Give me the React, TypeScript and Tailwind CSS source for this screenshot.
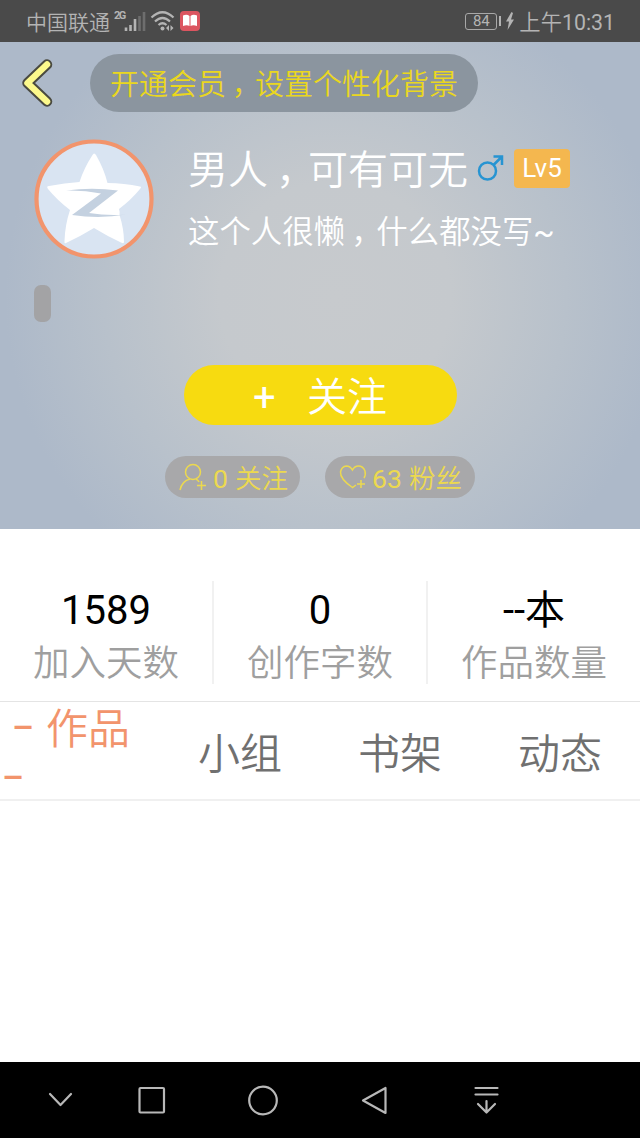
import { type ReactNode } from "react";

interface Stat {
  value: string;
  label: string;
}

const stats: Stat[] = [
  { value: "1589", label: "加入天数" },
  { value: "0", label: "创作字数" },
  { value: "--本", label: "作品数量" },
];

const tabs = ["小组", "书架", "动态"];

const StatusBar = () => {
  return (
    <div className="flex h-[42px] items-center bg-[#4a4a4a] pl-[26px] pr-[25px] text-[#b4b4b4]">
      <span className="w-[88px] pt-[3px] text-[21px] font-[350] leading-[42px]">中国联通</span>
      <span className="mb-[11px] w-[10px] text-[11px] font-bold leading-none tracking-[-1.5px]">2G</span>
      <svg width="22" height="22" viewBox="0 0 22 22" className="mt-px">
        <g stroke="#b4b4b4" strokeWidth="2.6">
          <path d="M2 20v-3.500M6.500 20v-6M11 20V8" />
          <path d="M15.500 20V5M20 20V1" stroke="#6e6e6e" />
        </g>
      </svg>
      <svg width="26" height="22" viewBox="0 0 26 22" className="ml-[4px]">
        <g fill="none" stroke="#b4b4b4" strokeWidth="2.2">
          <path d="M1.500 7.500Q12.500 -3 23.500 7.500M5 11.500Q12.500 4.500 20 11.500M8.500 15Q12.500 11.500 16.500 15" />
        </g>
        <circle cx="12.500" cy="18.500" r="2" fill="#b4b4b4" />
        <path d="M19 15v6l-3-3zM20.500 15v6l3-3z" fill="#b4b4b4" />
      </svg>
      <svg width="20" height="20" viewBox="0 0 20 20" className="ml-1">
        <rect width="20" height="20" rx="4" fill="#dc5560" />
        <path d="M3 4.500Q7 3 9.500 5v10Q7 13.500 3 15zM17 4.500Q13 3 10.500 5v10Q13 13.500 17 15z" fill="#fff" />
      </svg>
      <div className="ml-auto flex items-center">
        <div className="mr-[2px] flex h-[17px] w-8 items-center justify-center rounded-[3px] border border-[#a8a8a8] text-[15px] leading-none">
          84
        </div>
        <div className="h-[10px] w-[2px] bg-[#b4b4b4]" />
        <svg width="8" height="18" viewBox="0 0 8 18" className="ml-[5px]">
          <path d="M5.500 0L0 9.500h3L1.500 18L8 7.500H5L7 1z" fill="#b4b4b4" />
        </svg>
        <span className="ml-[5px] pt-[3px] text-[21.300px] font-[350] leading-[42px]">
          上午<span className="font-normal">10:31</span>
        </span>
      </div>
    </div>
  );
};

// half-width glyph set towards the middle of a full-width cell
const Comma = () => {
  return (
    <span className="inline-block w-[1em] indent-[0.2em] [font-feature-settings:'halt']">，</span>
  );
};

const Avatar = () => {
  return (
    <svg width="120" height="120" viewBox="0 0 120 120" className="shrink-0">
      <circle cx="60" cy="60" r="57.500" fill="#d9e4f2" stroke="#f2946c" strokeWidth="4.200" />
      <path
        d="M58.500 16Q60 13 62 16Q70 30 73.500 44Q90 44 106 47.500Q108 48 106 50Q97 61 85 70Q86 73 85.500 76Q90 90 90 103Q90 105 87 103.500Q73 97 60 89Q47 97 32 104Q30 105 30.500 102Q31 86 36 71Q23 61 14 50Q12 47 15 47Q31 44 45.500 43Q50 29 58.500 16z"
        fill="#fff"
      />
      <path
        d="M32 51.500Q58 48 84 51.500L55 74Q74 77 92 75.500Q66 80 38 76L67 54.500Q50 51 32 51.500z"
        fill="#c4d1e0"
      />
    </svg>
  );
};

const CountPill = ({ className, children }: { className: string; children: ReactNode }) => {
  return (
    <div
      className={`flex h-[42px] items-center rounded-full bg-[#a8a8aa] pl-[14px] text-[26.500px] leading-[42px] text-[#ecd94f] ${className}`}
    >
      {children}
    </div>
  );
};

const Hero = () => {
  return (
    <div className="h-[487px] bg-[#adb9c9] bg-[radial-gradient(ellipse_330px_330px_at_335px_255px,#c7cacd_0%,#c5c9cd_35%,#b8c1cb_70%,#adb9c9_100%)] pt-3">
      <div className="flex h-[58px] items-center">
        <svg width="34" height="52" viewBox="0 0 34 52" className="ml-5 shrink-0">
          <g fill="none" strokeLinecap="round" strokeLinejoin="round">
            <path d="M27 7.500L7.500 26L27 44.500" stroke="#4a4a40" strokeWidth="10.500" />
            <path d="M27 7.500L7.500 26L27 44.500" stroke="#fcf98c" strokeWidth="6.500" />
          </g>
        </svg>
        <div className="ml-9 h-[58px] w-[388px] whitespace-nowrap rounded-full bg-[#8b959f] pl-5 text-[29px] font-[350] leading-[63px] text-[#ead71e]">
          开通会员
          <Comma />
          设置个性化背景
        </div>
      </div>

      <div className="flex pl-[34px] pt-[27px]">
        <Avatar />
        <div className="ml-[34px] whitespace-nowrap text-white">
          <div className="flex h-[58px] items-center">
            <span className="pt-[6px] text-[40px] font-[350] leading-[58px]">
              男人
              <Comma />
              可有可无
            </span>
            <svg width="28" height="28" viewBox="0 0 28 28" className="ml-[9px]">
              <g fill="none" stroke="#2794d2" strokeWidth="2.500">
                <circle cx="10.500" cy="17" r="8.500" />
                <path d="M16.500 11L25 2.500M16.500 2.500H25V11" />
              </g>
            </svg>
            <span className="ml-[9px] h-[39px] w-14 rounded-[4px] bg-[#f4b74f] text-center text-[26px] leading-[39px]">
              Lv5
            </span>
          </div>
          <div className="mt-[10px] text-[31.400px] font-[350] leading-[51px]">
            这个人很懒
            <Comma />
            什么都没写<span className="font-normal">~</span>
          </div>
        </div>
      </div>

      <div className="ml-[34px] mt-[26px] h-[37px] w-[17px] rounded-[7px] bg-[#a3a3a5]" />

      <button className="ml-[184px] mt-[43px] flex h-[60px] w-[273px] items-center rounded-full bg-[#f7db10] pl-[69px] pt-[6px] text-left text-[40px] font-[350] leading-[60px] text-white">
        <span className="w-[54px] font-normal">+</span>
        <span>关注</span>
      </button>

      <div className="mt-[31px] flex gap-[25px] pl-[165px]">
        <CountPill className="w-[135px]">
          <svg width="28" height="28" viewBox="0 0 28 28">
            <g fill="none" stroke="#ecd94f" strokeWidth="1.500">
              <circle cx="14" cy="9" r="7.500" />
              <path d="M1 27Q3 18 11 16M17 16Q19 17 20 19M22.500 18v9M18 22.500h9" />
            </g>
          </svg>
          <span className="ml-[6px] w-[22px] pt-[3px]">0</span>
          <span className="pt-[4px] font-[350]">关注</span>
        </CountPill>
        <CountPill className="w-[150px]">
          <svg width="28" height="28" viewBox="0 0 28 28">
            <g fill="none" stroke="#ecd94f" strokeWidth="1.500">
              <path d="M25 15Q27 12 26 8Q24 3 19.500 3Q15.500 3 13.500 7Q11 3 7.500 3Q2.500 3.500 1.500 9Q1 16 13.500 24.500L17 22M22 17v8M18 21h8" />
            </g>
          </svg>
          <span className="ml-[5px] w-[37px] pt-[3px]">63</span>
          <span className="pt-[4px] font-[350]">粉丝</span>
        </CountPill>
      </div>
    </div>
  );
};

const Stats = () => {
  return (
    <div className="flex h-[173px] border-b border-[#e4e4e4] pt-[52px]">
      {stats.map((el) => (
        <div
          key={el.label}
          className="h-[103px] flex-1 border-r-2 border-[#f1f1f1] text-center last:border-r-0"
        >
          <div className="h-[56px] text-[40px] leading-[59px] text-black">{el.value}</div>
          <div className="text-[36.500px] font-[350] leading-[53px] text-[#9f9f9f]">{el.label}</div>
        </div>
      ))}
    </div>
  );
};

const Tabs = () => {
  return (
    <div className="flex h-[99px] border-b-2 border-[#f0f0f0] text-[42px] font-[350] text-[#707070]">
      <div className="w-40 pt-[3px] leading-[49px] text-[#f2946c]">
        <div className="flex pl-[12px]">
          <span className="w-[34px] text-[34px] font-medium leading-[44px]">–</span>
          <span>作品</span>
        </div>
        <div className="pl-[2px] text-[34px] font-medium leading-[46px]">–</div>
      </div>
      {tabs.map((el) => (
        <div key={el} className="w-40 text-center leading-[105px]">
          {el}
        </div>
      ))}
    </div>
  );
};

const NavBar = () => {
  return (
    <div className="mt-auto h-[76px] bg-black">
      <svg width="640" height="76" viewBox="0 0 640 76">
        <g fill="none" stroke="#b8b8b8" strokeWidth="2.200" strokeLinejoin="round" strokeLinecap="round">
          <path d="M50 32L60.500 43L71 32" />
          <rect x="139.500" y="26" width="24.500" height="24.500" rx="1" />
          <circle cx="263" cy="38.500" r="13.800" />
          <path d="M385.500 26v25L363 38.500z" />
          <path d="M475.500 26h22M475.500 32.500h22M486.500 39v11M478 42l8.500 8.500l8.500 -8.500" />
        </g>
      </svg>
    </div>
  );
};

const App = () => {
  return (
    <div className="flex h-[1138px] w-[640px] flex-col overflow-hidden bg-white font-[Roboto,'Noto_Sans_CJK_SC',sans-serif]">
      <StatusBar />
      <Hero />
      <Stats />
      <Tabs />
      <NavBar />
    </div>
  );
};

export default App;
